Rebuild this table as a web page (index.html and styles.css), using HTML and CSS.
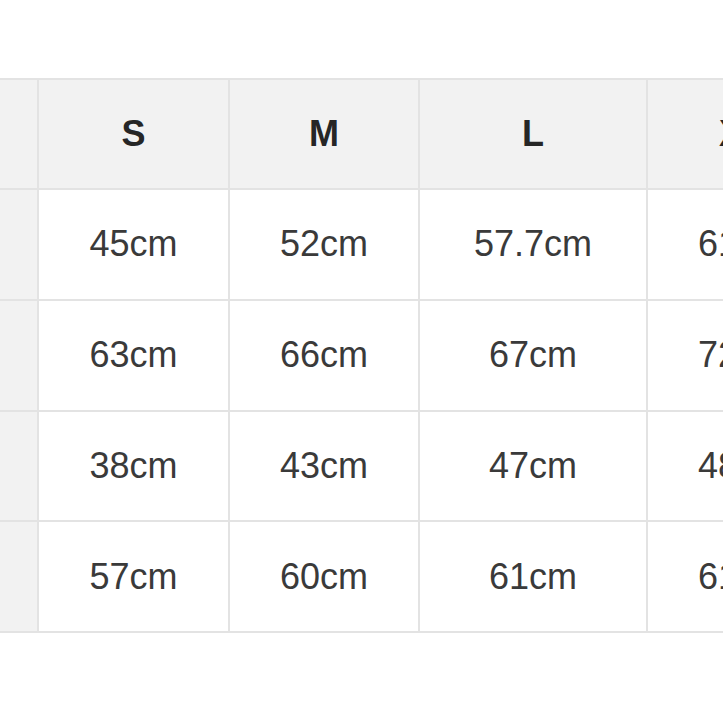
FILE: index.html
```html
<!DOCTYPE html>
<html>
<head>
<meta charset="utf-8">
<link rel="stylesheet" href="styles.css">
</head>
<body>
<div class="wrap">
  <div class="grid">
    <div class="cell side"></div>
    <div class="cell head">S</div>
    <div class="cell head">M</div>
    <div class="cell head">L</div>
    <div class="cell head">XL</div>
    <div class="cell head">2XL</div>

    <div class="cell side"></div>
    <div class="cell">45cm</div>
    <div class="cell">52cm</div>
    <div class="cell">57.7cm</div>
    <div class="cell">61cm</div>
    <div class="cell">64cm</div>

    <div class="cell side"></div>
    <div class="cell">63cm</div>
    <div class="cell">66cm</div>
    <div class="cell">67cm</div>
    <div class="cell">72cm</div>
    <div class="cell">74cm</div>

    <div class="cell side"></div>
    <div class="cell">38cm</div>
    <div class="cell">43cm</div>
    <div class="cell">47cm</div>
    <div class="cell">48cm</div>
    <div class="cell">50cm</div>

    <div class="cell side"></div>
    <div class="cell">57cm</div>
    <div class="cell">60cm</div>
    <div class="cell">61cm</div>
    <div class="cell">61cm</div>
    <div class="cell">63cm</div>
  </div>
</div>
</body>
</html>
```
FILE: styles.css
```css
html, body {
  margin: 0;
  padding: 0;
  background: #ffffff;
}
body {
  width: 723px;
  height: 723px;
  overflow: hidden;
  font-family: "Liberation Sans", Arial, sans-serif;
}
.wrap {
  padding-top: 78px;
  width: 723px;
  overflow: hidden;
}
.grid {
  display: grid;
  grid-template-columns: 37px 189px 188px 226px 188px 188px;
  grid-template-rows: 108px repeat(4, 108.75px);
  gap: 2px;
  padding: 2px 0;
  background: #e3e3e3;
  width: max-content;
}
.cell {
  background: #ffffff;
  display: flex;
  align-items: center;
  justify-content: center;
  font-size: 36px;
  color: #3a3a3a;
  white-space: nowrap;
}
.side {
  background: #f2f2f2;
}
.head {
  background: #f2f2f2;
  font-weight: 700;
  color: #262626;
}
```
